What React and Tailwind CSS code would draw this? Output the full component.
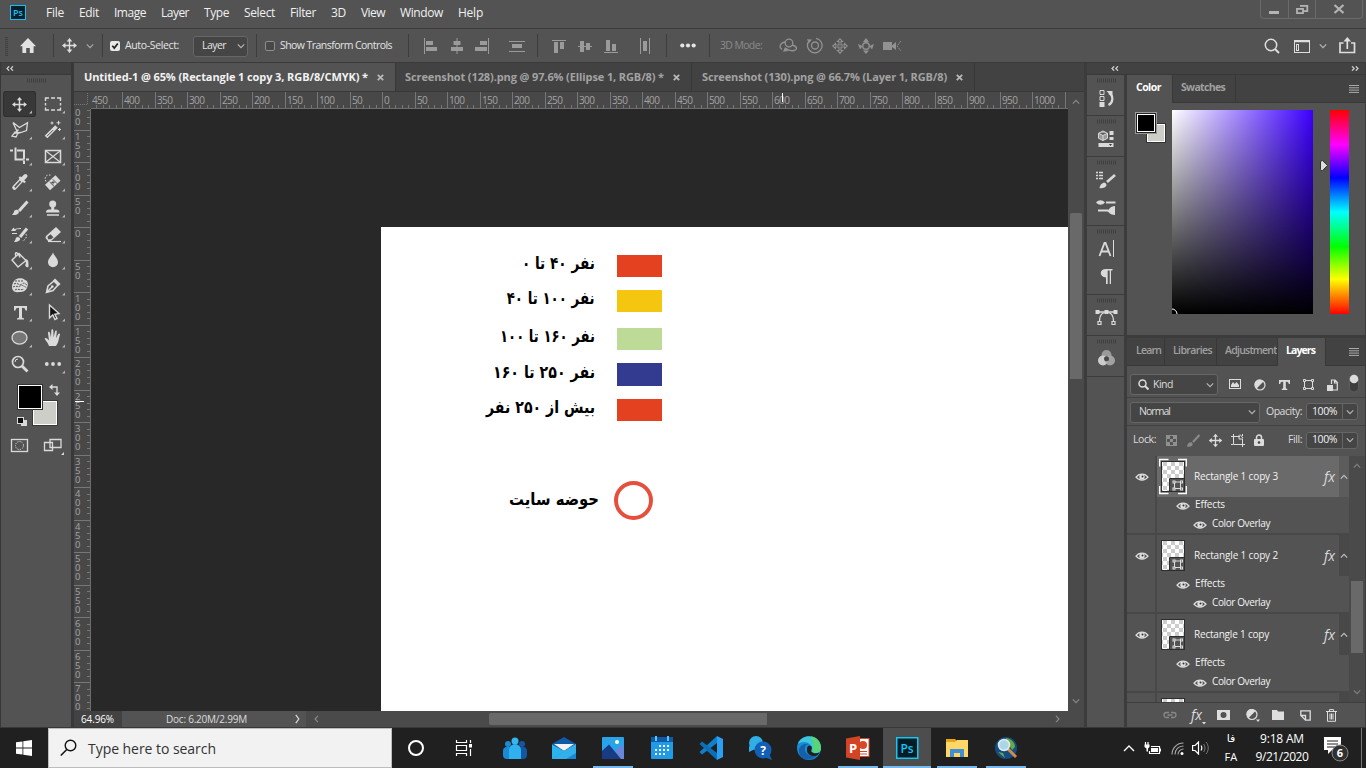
import React, { useLayoutEffect, useRef } from "react";

/* Text run fitted to a fixed advance width by letter spacing (or by horizontal scale for joined scripts). */
function Fit({ w, scale, className = "", children }) {
  const ref = useRef(null);
  useLayoutEffect(() => {
    const el = ref.current;
    el.style.letterSpacing = "0px";
    el.style.transform = "none";
    const natural = el.getBoundingClientRect().width;
    if (scale) el.style.transform = `scaleX(${w / natural})`;
    else el.style.letterSpacing = `${(w - natural) / String(children).length}px`;
  }, [w, scale, children]);
  return (
    <span ref={ref} className={"inline-block shrink-0 whitespace-pre " + className}>
      {children}
    </span>
  );
}

function S({ w, h, className = "", children }) {
  return (
    <svg width={w} height={h} viewBox={`0 0 ${w} ${h}`} fill="none" stroke="currentColor" className={"block shrink-0 " + className}>
      {children}
    </svg>
  );
}

const F = { fill: "currentColor", stroke: "none" };

const Grip = ({ className = "" }) => (
  <S w={20} h={5} className={"text-[#3f3f3f] " + className}>
    <path d="M1 2.5H20" strokeWidth="4" strokeDasharray="1 1" />
  </S>
);
const Chevron = ({ className = "", up }) => (
  <S w={8} h={6} className={className}>
    <path d={up ? "M.8 4.6 4 1.4l3.2 3.2" : "M.8 1.4 4 4.6l3.2-3.2"} strokeWidth="1.2" />
  </S>
);
const Move = ({ className = "" }) => (
  <S w={15} h={15} className={className}>
    <path d="M7.5 2v11M2 7.5h11" strokeWidth="1.4" />
    <path {...F} d="M7.5 0 10.3 3.4H4.7ZM7.5 15 4.7 11.6h5.6ZM0 7.5 3.4 4.7v5.6ZM15 7.5l-3.4 2.8V4.7Z" />
  </S>
);
const DoubleArrow = ({ right }) => (
  <S w={8} h={5} className="text-[#d0d0d0]">
    <path d={right ? "M1 .3 3.2 2.5 1 4.7M4.8.3 7 2.5 4.8 4.7" : "M3.2.3 1 2.5l2.2 2.2M7 .3 4.8 2.5 7 4.7"} strokeWidth="1.2" />
  </S>
);

const MENU = [
  ["File", 18, "w-[33px]"], ["Edit", 20, "w-[35px]"], ["Image", 32, "w-[47px]"], ["Layer", 28, "w-[43px]"],
  ["Type", 25, "w-[40px]"], ["Select", 31, "w-[46px]"], ["Filter", 26, "w-[41px]"], ["3D", 15, "w-[30px]"],
  ["View", 24, "w-[39px]"], ["Window", 43, "w-[58px]"], ["Help", 25, "w-[40px]"],
];

function MenuBar() {
  return (
    <div className="flex h-[29px] shrink-0 border-b border-[#3a3a3a] text-[12px] text-[#f0f0f0]">
      <div className="ml-[10px] mt-[5px] flex h-[15px] w-4 items-center justify-center border border-[#12c0f4] bg-[#06202b] text-[9px] font-semibold leading-none text-[#23bdee]">Ps</div>
      <div className="ml-5 flex h-[26px] items-center">
        {MENU.map(([t, w, c]) => (
          <div key={t} className={c}><Fit w={w}>{t}</Fit></div>
        ))}
      </div>
      <div className="ml-auto mr-[3px] flex h-[19px] w-[103px] rounded-b border border-t-0 border-[#6a6a6a] text-[#b4b4b4]">
        <S w={27} h={18}><path d="M8 12.5h10" strokeWidth="3" /></S>
        <div className="w-px bg-[#6a6a6a]" />
        <S w={26} h={18}><path d="M11 5.8h7.3v5.4H14M8 8.8h6v4.4H8Z" strokeWidth="1.8" /></S>
        <div className="w-px bg-[#6a6a6a]" />
        <S w={46} h={18}><path d="m18.5 5 9 8M27.500 5l-9 8" strokeWidth="2.2" /></S>
      </div>
    </div>
  );
}

const Sep = ({ className = "" }) => <div className={"h-[23px] w-px shrink-0 bg-[#3d3d3d] " + className} />;

function OptionsBar() {
  return (
    <div className="flex h-[34px] shrink-0 items-center border-b border-[#3a3a3a] text-[10.5px] text-[#e4e4e4]">
      <S w={3} h={20} className="ml-[5px] text-[#3f3f3f]"><path d="M1.500 1v19" strokeWidth="3" strokeDasharray="1 1" /></S>
      <S w={16} h={15} className="ml-3 text-[#e2e2e2]"><path {...F} d="M8 0 16 8.300H13.600V15H9.800V10H6.200v5H2.400V8.300H0Z" /></S>
      <Sep className="ml-[17px]" />
      <Move className="ml-2 text-[#dedede]" />
      <Chevron className="ml-[9px] text-[#a9a9a9]" />
      <Sep className="ml-2" />
      <S w={10} h={10} className="ml-[7px]"><rect width="10" height="10" rx="2" fill="#e8e8e8" stroke="none" /><path d="m2.300 4.800 2 2.300L7.800 2.500" stroke="#222" strokeWidth="1.700" /></S>
      <Fit w={54} className="ml-[5px]">Auto-Select:</Fit>
      <div className="ml-[14px] mt-px flex h-[21px] w-[55px] items-center rounded-[3px] border border-[#666] bg-[#454545] pl-2">
        <Fit w={24}>Layer</Fit><Chevron className="ml-[11px] text-[#b5b5b5]" />
      </div>
      <Sep className="ml-2" />
      <div className="ml-2 size-[10px] rounded-[2px] border border-[#8e8e8e] bg-[#484848]" />
      <Fit w={112} className="ml-[5px]">Show Transform Controls</Fit>
      <Sep className="ml-4" />
      <div className="flex items-center text-[#9b9b9b]">
        <S w={14} h={16} className="ml-[15px]"><path d="M.5 0v16" /><path {...F} d="M2 3h7v4H2zM2 9h11v4H2z" /></S>
        <S w={12} h={16} className="ml-[13px]"><path d="M6 0v16" /><path {...F} d="M2.500 3h7v4h-7zM0 9h12v4H0z" /></S>
        <S w={14} h={16} className="ml-3"><path d="M13.500 0v16" /><path {...F} d="M5 3h7v4H5zM0 9h12v4H0z" /></S>
        <S w={16} h={16} className="ml-5"><path d="M0 3.500h16M0 13.500h16" /><path {...F} d="M3 6h10v4H3z" /></S>
        <Sep className="ml-[12px]" />
        <S w={14} h={16} className="ml-[14px]"><path d="M0 2.500h14" /><path {...F} d="M2 4h4v11H2zM8 4h4v7H8z" /></S>
        <S w={14} h={16} className="ml-3"><path d="M0 8.500h14" /><path {...F} d="M2 3h4v11H2zM8 5h4v7H8z" /></S>
        <S w={14} h={16} className="ml-3"><path d="M0 14.500h14" /><path {...F} d="M2 2h4v11H2zM8 6h4v7H8z" /></S>
        <S w={10} h={16} className="ml-[22px]"><path d="M.5 0v16M9.500 0v16" /><path {...F} d="M3 3h4v10H3z" /></S>
      </div>
      <Sep className="ml-4" />
      <S w={16} h={5} className="ml-[13px] text-[#e4e4e4]"><g {...F}><circle cx="2.300" cy="2.500" r="2.100" /><circle cx="8" cy="2.500" r="2.100" /><circle cx="13.700" cy="2.500" r="2.100" /></g></S>
      <Sep className="ml-[13px]" />
      <Fit w={42} className="ml-[10px] text-[#8b8b8b]">3D Mode:</Fit>
      <div className="flex items-center text-[#929292]">
        <S w={19} h={16} className="ml-[17px]"><circle cx="10" cy="5" r="3.800" strokeWidth="1.300" /><path d="M7 4C1 4.500-.5 9 3 11.500M13 7c5 1 6 4.500 2 5.500-3 .7-6-.5-8-2" strokeWidth="1.300" /><path {...F} d="M4 13.800 9.500 13 6 9Z" /></S>
        <S w={17} h={17} className="ml-[8px]"><circle cx="9" cy="8.500" r="3.500" strokeWidth="1.300" /><path d="M3 4A7.300 7.300 0 1 0 10 1.300" strokeWidth="1.300" /><path {...F} d="m1 2.200 5 .3-3 3.700Z" /></S>
        <S w={16} h={16} className="ml-[9px]"><path d="M8 .8 10.500 3.500H9v3.500h3.500V5.500L15.200 8l-2.700 2.500V9H9v3.500h1.500L8 15.200 5.500 12.500H7V9H3.500v1.500L.8 8l2.700-2.500V7H7V3.500H5.500Z" strokeWidth="1.100" /></S>
        <S w={16} h={16} className="ml-[10px]"><circle cx="8" cy="8" r="3.300" strokeWidth="1.400" /><path {...F} d="m8 0 3 4H5ZM8 16l-3-3.500h6ZM0 6l4.500 2L2 11.500ZM16 6l-4.500 2 2.500 3.500Z" /></S>
        <S w={19} h={12} className="ml-[9px]"><path {...F} d="M0 2h9v8H0zM9 5.500 13 2v8L9 7Z" /><path d="m18 1-4 5 4 5" strokeDasharray="2 1" /></S>
      </div>
      <div className="ml-auto mr-[10px] flex items-center text-[#dedede]">
        <S w={16} h={16}><circle cx="7" cy="7" r="5.700" strokeWidth="1.500" /><path d="m11 11 4 4" strokeWidth="1.900" /></S>
        <S w={16} h={13} className="ml-[14px] mt-px"><rect x=".5" y=".5" width="15" height="12" /><path d="M0 1.500h16" strokeWidth="1.500" /><rect x="2.500" y="4.500" width="2" height="6" /></S>
        <Chevron className="ml-[9px] text-[#b5b5b5]" />
        <S w={17} h={17} className="ml-3"><path d="M4.500 6H1v9.500h14.500V6H12M8.300 12V2" strokeWidth="1.700" /><path {...F} d="m8.300 0 3.800 4.500H4.500Z" /></S>
      </div>
    </div>
  );
}

const TOOLS = [
  <><path d="M9.500 5v11M4 10.500h11" strokeWidth="1.500" /><path {...F} d="m9.500 3 2.600 3.200H6.900ZM9.500 18l-2.600-3.200h5.200ZM2 10.500l3.200-2.600v5.200ZM17 10.500l-3.200 2.600V7.900Z" /></>,
  <path d="M2.500 7V4H6m2 0h4m2 0h3.500v3m0 2v2.500m0 2V16H14m-2 0H8m-2 0H2.500v-2.500m0-2V9" strokeWidth="1.400" />,
  <><path d="m3 2.500 6.500 5 8-4.800-1 7.800-8.500 3L3 2.500M8.500 9.500 5.500 13l5.500-.5M8.500 12 6 17l-4-1 3.500-4.500" strokeWidth="1.300" /></>,
  <><path d="M3 17 13.500 6.500" strokeWidth="3.800" /><path d="m4 16.200 6-6" stroke="#535353" strokeWidth="1" /><path d="M9 1.500v3M7.500 3h3M15.500.8v4M13.500 2.800h4M16.500 8v3M15 9.500h3" /></>,
  <><path d="M5.500 1.500v12h8M0 4.500h3M7 4.500h7v9M14 14.500v3.500M16 13.500h3" strokeWidth="2" /></>,
  <><rect x="2.500" y="4.500" width="15" height="12" strokeWidth="1.500" /><path d="m3 5 14 11M17 5 3 16" strokeWidth="1.200" /></>,
  <><path d="m4.500 15.500 7.500-8" strokeWidth="4.500" strokeLinecap="round" /><path d="m4.800 15.300 5.800-6.200" stroke="#535353" strokeWidth="1.700" /><path d="M12 7.500 15.500 4" strokeWidth="4" strokeLinecap="round" /><path d="m9.300 5 5.800 5.500" strokeWidth="2.200" /></>,
  <><path d="m4.500 15.500 10.500-9.500" strokeWidth="7.500" strokeLinejoin="round" /><path d="M6.700 10 11 14.300M9.800 7.300l4.200 4.300M8.300 10.500l3.200 0M10 9v3.500" stroke="#535353" strokeWidth="1" /><path d="M3 9.500C.5 5.500 3.500 1.500 8.500 3.500" strokeDasharray="1.500 1.500" /></>,
  <><path d="M17.500 3.500 9 13" strokeWidth="3" /><path {...F} d="M2 17c2.500.3 7.800-.5 6.800-3.800-2-2.500-4.800-1.200-5 1.300Z" /></>,
  <><circle cx="9.700" cy="6" r="3.500" {...F} /><path d="M9.700 8v4" strokeWidth="3" /><path {...F} d="M3 14.500c0-3.500 3-3 6.700-3s6.800-.5 6.800 3ZM4 16.300h12v1.500H4z" /></>,
  <><path d="M17 4.500 10 13" strokeWidth="3" /><path {...F} d="M4 18c2 0 6.800-.7 6-3.800-2-2.500-4.500-1-4.500 1.300ZM1 7l2.500-3.500L6 7Z" /><path d="M4 6c2-1.500 4-1.500 7-1.500M2 9.500h5" strokeWidth="1.200" /><path d="M16 10c1.500 3-1 6.500-4 7" strokeDasharray="1.500 1.500" /></>,
  <><path {...F} d="m3 12 10-9 5 5-10 9H5L2.500 14Z" /><path d="m4.500 12.800 3-2.500 3 3-2.500 2H5Z" fill="#535353" stroke="none" /><path d="M5 17.500h13" strokeWidth="1.200" /></>,
  <><path d="m2 10 7-6.500 7 7-8 6.500-6-7ZM6 6.500C4 1 8 1.500 10 7.500" strokeWidth="1.400" /><path {...F} d="M14.500 9c4.500 0 4 3 4 8-3 1-4-2-2.500-4Z" /></>,
  <path {...F} d="M10 2.500c1.500 4 5 5.800 5 9.700a5 5 0 0 1-10 0C5 8.300 8.500 6.500 10 2.500Z" />,
  <><path {...F} d="M5 4c2-2 8-2.500 10 0 4 1 3 6 2 8-2 4-5 4-8 4C4 17 2 14 2 11c0-3 1-5 3-7Z" /><path d="M5 5h8m-9 3c3-2 5 2 8 0s3 0 5 1M3 11c4-2 4 1 7-1s5 2 7 1M5 14c3-2 5 1 9-1" stroke="#535353" strokeDasharray="2 1" /></>,
  <><path d="M3.500 16.500 5 10l6-5 4 4-5 5.500ZM4 16l5.500-5.500" strokeWidth="1.500" /><path d="m11 3.500 5.500 5.500" strokeWidth="3" /><circle cx="9.300" cy="10.500" r="1.300" {...F} /></>,
  <path {...F} d="M4 4h13v4.500h-1.500c-.3-2-1-2.700-3.500-2.700v9c0 1.200.7 1.500 2 1.500V17.500H7v-1.200c1.300 0 2-.3 2-1.500v-9C6.500 5.800 5.800 6.500 5.500 8.500H4Z" />,
  <><path d="M6.500 3v13l3.300-3 2.200 4.500 2-1-2.200-4.300 4.200-.7Z" fill="#111" strokeWidth="1.400" /></>,
  <ellipse cx="9.500" cy="9.800" rx="7.500" ry="6.300" fill="#777" strokeWidth="1.300" />,
  <path {...F} d="M6 18C5 14.500 2 12 1.500 10.500 2.500 9 5 11 6 12.500L5 5c0-1.800 1.700-1.800 2 0l1 4.500.3-7c.2-1.600 1.900-1.600 2 0l.3 7 1.400-6c.5-1.600 2-1.200 1.800.3l-.7 6.500 2-4c.8-1.300 2.300-.6 1.800.8-1 3-1.300 8-4 10.900Z" />,
  <><circle cx="8" cy="8" r="5.500" strokeWidth="1.700" /><path d="m12 12 5.500 5.500" strokeWidth="2.800" /><path d="M5 8a3 3 0 0 1 3-3" /></>,
  <g {...F}><circle cx="3.800" cy="10" r="1.900" /><circle cx="10" cy="10" r="1.900" /><circle cx="16.200" cy="10" r="1.900" /></g>,
];

function Toolbar() {
  return (
    <aside className="flex w-[74px] shrink-0 flex-col border-x border-r-[3px] border-[#383838] bg-[#535353]">
      <div className="flex h-[12px] items-center border-b border-[#383838] bg-[#424242] pl-[5px]"><DoubleArrow /></div>
      <div className="flex h-[16px] justify-center pt-[3px]"><Grip /></div>
      <div className="ml-[2px] grid w-[66px] grid-cols-2">
        {TOOLS.map((icon, i) => (
          <div key={i} className={"h-[26px] w-[33px] " + (i === 0 ? "rounded-[3px] bg-[#383838] outline outline-1 -outline-offset-1 outline-[#2e2e2e]" : "")}>
            <S w={33} h={26} className="text-[#dadada]">
              <g transform="translate(7 3)">{icon}</g>
              {i !== 20 && <path {...F} fill="#b5b5b5" d="M29 19.500V22.500h-3Z" />}
            </S>
          </div>
        ))}
      </div>
      <S w={68} h={80} className="text-[#dadada]">
        <rect x="31" y="23" width="26" height="26" fill="#383838" stroke="none" /><rect x="32.500" y="24.500" width="23" height="23" fill="#cdcec8" stroke="#fff" />
        <rect x="16" y="7" width="26" height="26" fill="#333" stroke="none" /><rect x="17.500" y="8.500" width="23" height="23" fill="#000" stroke="#fff" />
        <path d="M50 10h6v6" strokeWidth="1.400" /><path {...F} d="m48 10 3.500-3v6ZM56 19l-3-3.500h6Z" />
        <path {...F} d="M20 43h6v6h-6zM16 40h7v7h-7z" /><path d="M17 41h5v5h-5z" fill="#111" stroke="none" />
        <rect x="10.500" y="62.500" width="16" height="12" strokeWidth="1.300" /><circle cx="18.500" cy="68.500" r="4" strokeDasharray="1.200 1.100" />
        <path d="M43.500 65.500h8v8h-8zM49 62.500h11v8H49z" strokeWidth="1.300" fill="#535353" /><path {...F} d="M63 75v3h-3Z" />
      </S>
    </aside>
  );
}

const TABS = [
  ["Untitled-1 @ 65% (Rectangle 1 copy 3, RGB/8/CMYK) *", 284, "w-[322px] bg-[#535353] text-[#f2f2f2] pl-[10px]", "ml-[9px]"],
  ["Screenshot (128).png @ 97.6% (Ellipse 1, RGB/8) *", 259, "w-[296px] bg-[#424242] text-[#a3a3a3] pl-[9px]", "ml-[9px]"],
  ["Screenshot (130).png @ 66.7% (Layer 1, RGB/8)", 245, "w-[283px] bg-[#424242] text-[#a3a3a3] pl-[10px]", "ml-[9px]"],
];

function HRuler() {
  const zero = 308.500, k = 0.65, items = [];
  for (let u = -450; u <= 1050; u += 10) {
    const x = Math.floor(zero + u * k) + 0.5, major = u % 50 === 0;
    if (x > 17) items.push(<path key={u} d={`M${x} ${major ? 0 : 13}V16`} stroke="#777" />);
    if (major && u < 1050) items.push(<text key={"t" + u} x={x + 1.500} y="12" fontSize="10" textLength={String(Math.abs(u)).length * 5.300} fill="#a3a3a3" stroke="none">{Math.abs(u)}</text>);
  }
  return (
    <S w={994} h={17} className="bg-[#484848]">
      {items}
      <path d="M17 16.500H994" stroke="#6d6d6d" /><path d="M0 12.500h13.500V0" stroke="#777" strokeDasharray="1 1" /><path d="M708.500 1v9" stroke="#fff" />
    </S>
  );
}

function VRuler() {
  const items = [];
  for (let u = -180; u <= 740; u += 10) {
    const y = Math.floor(118.500 + u * 0.65) + 0.5, major = u % 50 === 0;
    items.push(<path key={u} d={`M${major ? 0 : 13} ${y}H16`} stroke="#777" />);
  }
  for (let u = -200; u <= 700; u += 50) {
    const y = Math.floor(118.500 + u * 0.65);
    String(Math.abs(u)).split("").forEach((c, i) => items.push(<text key={u + "-" + i} x="1" y={y + 10 + i * 9} fontSize="9.5" fill="#a3a3a3" stroke="none">{c}</text>));
  }
  return <S w={17} h={602} className="bg-[#484848]">{items}<path d="M16.500 0V602" stroke="#6d6d6d" /><path d="M1 292.500h9" stroke="#fff" /></S>;
}

const LEGEND = [
  ["نفر ۴۰ تا ۰", 73, "mt-[28px] h-[22px] bg-[#e34120]"],
  ["نفر ۱۰۰ تا ۴۰", 88, "mt-[13px] h-[22px] bg-[#f4c60f]"],
  ["نفر ۱۶۰ تا ۱۰۰", 95, "mt-[16px] h-[22px] bg-[#bddb97]"],
  ["نفر ۲۵۰ تا ۱۶۰", 102, "mt-[13px] h-[23px] bg-[#333b91]"],
  ["بیش از ۲۵۰ نفر", 109, "mt-[13px] h-[22px] bg-[#e34120]"],
];

function Document() {
  return (
    <section className="flex w-[1010px] shrink-0 flex-col">
      <div className="flex h-[29px] shrink-0 border-b border-[#383838] bg-[#424242] text-[11px] font-bold">
        {TABS.map(([t, w, c, m]) => (
          <div key={t} className={"flex items-center border-r border-[#383838] " + c}>
            <Fit w={w}>{t}</Fit>
            <S w={7} h={7} className={"text-[#b8b8b8] " + m}><path d="m.8.8 5.400 5.400M6.200.8.800 6.200" strokeWidth="1.800" /></S>
          </div>
        ))}
      </div>
      <div className="flex shrink-0">
        <div>
          <HRuler />
          <div className="flex h-[602px]">
            <VRuler />
            <div className="flex-1 bg-[#282828] pl-[290px] pt-[118px]">
              <div className="h-full bg-white">
                <div dir="ltr" className="flex w-[282px] flex-col items-end font-['DejaVu_Sans',sans-serif] text-[17px] font-bold text-black">
                  {LEGEND.map(([t, w, c]) => (
                    <div key={t} className={"mr-px flex w-[45px] items-center justify-end " + c}>
                      <div dir="rtl" className="mr-[67px] h-[26px] leading-[20px]"><Fit w={w} scale className="origin-right">{t}</Fit></div>
                    </div>
                  ))}
                  <div className="mr-[10px] mt-[60px] flex items-center">
                    <div dir="rtl" className="mr-[15px] h-[26px] leading-[22px]"><Fit w={90} scale className="origin-right">حوضه سایت</Fit></div>
                    <div className="size-[39px] rounded-full border-[4px] border-[#e74f3d]" />
                  </div>
                </div>
              </div>
            </div>
          </div>
        </div>
        <div className="flex w-4 flex-col items-center bg-[#4a4a4a] text-[#888]">
          <Chevron up className="mt-[7px]" />
          <div className="mt-[108px] h-[166px] w-3 rounded-t-[2px] bg-[#696969]" />
          <Chevron className="mb-[7px] mt-auto" />
        </div>
      </div>
      <div className="flex h-4 shrink-0 items-center bg-[#4a4a4a] text-[10px] text-[#dcdcdc]">
        <div className="flex h-full w-[48px] items-center bg-[#424242] pl-[7px] text-white"><Fit w={33}>64.96%</Fit></div>
        <div className="flex h-full w-[184px] items-center bg-[#535353] pl-[44px]">
          <Fit w={81}>Doc: 6.20M/2.99M</Fit>
          <S w={5} h={10} className="ml-[48px]"><path d="m.8.8 3 4.200-3 4.200" strokeWidth="1.200" /></S>
        </div>
        <S w={5} h={8} className="ml-[8px] text-[#888]"><path d="m4 .8-3 3.200 3 3.200" strokeWidth="1.200" /></S>
        <div className="ml-[170px] h-3 w-[278px] rounded-l-[2px] bg-[#696969]" />
        <S w={5} h={8} className="ml-[288px] text-[#888]"><path d="m1 .8 3 3.200-3 3.200" strokeWidth="1.200" /></S>
      </div>
    </section>
  );
}

const STRIP = [
  ["h-[41px]", <><path d="M11 11.500h4v4h-4zM11 17.500h4v4h-4z" /><path {...F} d="M10.500 23h5v5h-5zM17.500 12h6v6Z" /><path d="M20 14c5 3 4 10-.5 12" strokeWidth="2.200" /></>],
  ["h-[41px]", <><path d="m14 11 4.500 2.300v5L14 20.500 9.500 18.300v-5ZM9.500 13.300l4.500 2.200 4.500-2.200M14 15.500v5" fill="#999" /><path {...F} d="M20.500 11h4v4h-4zM20.500 17h4v3h-4zM9.500 23h15v4h-15z" /><path d="m20 24 3 0-1.500 2Z" fill="#333" stroke="none" /></>],
  ["h-[69px]", <><path d="M7 11.500h2m1 0h4M7 14.500h2m1 0h4M7 17.500h2m1 0h4" strokeWidth="1.500" /><path d="m26 14-8 7" strokeWidth="2.600" /><path {...F} d="M10.500 27c.5-3 3-6 6-5 3 3-1.500 6-6 5ZM7 41.500c3-3 6-3 9 0-3 3-6 3-9 0Z" /><path d="M17 41.500h9.500M9 49.500h10" strokeWidth="1.800" /><path {...F} d="M18 50c2-1 3-5 8-5v9c-5 0-6-3-8-4Z" /></>],
  ["h-[69px]", <><path d="m11 27 5-13h1l5 13M12.500 22.500h8" strokeWidth="1.800" transform="translate(-.5 -1)" /><path d="M24.500 10v17" /><path {...F} d="M17 54V47.500C10 47 10 39 17 39h6.500v1.500H22V54h-1.300V40.500h-2V54Z" /></>],
  ["h-[41px]", <><path d="M7 13h19" strokeWidth="1.500" /><path {...F} d="M5.500 11h4v4h-4zM14.500 11h4v4h-4zM23.500 11h4v4h-4z" /><path d="M14.500 13.500c-4 1-5 5-5 9M18.500 13.500c4 1 5 5 5 9M8 22.500h3v3H8zM22 22.500h3v3h-3z" strokeWidth="1.200" /></>],
  ["h-[41px]", <><circle cx="16.500" cy="15" r="5" fill="#999" stroke="none" /><circle cx="13" cy="20.500" r="5" fill="#ccc" stroke="none" /><circle cx="20" cy="20.500" r="5" fill="#aaa" stroke="none" fillOpacity=".9" /><circle cx="16.500" cy="18.700" r="2.500" fill="#484848" stroke="none" /></>],
];

const Burger = () => <S w={10} h={8} className="text-[#aaa]"><path d="M0 .5h10M0 2.800h10M0 5.100h10M0 7.400h10" /></S>;
const Eye = ({ className = "" }) => (
  <S w={14} h={8} className={"text-[#dedede] " + className}>
    <path d="M1 4.200C4 0 10 0 13 4.200 10 8 4 8 1 4.200Z" strokeWidth="1.300" /><circle cx="7" cy="4" r="2.700" {...F} /><circle cx="7.500" cy="3.400" r="1" fill="#333" stroke="none" />
  </S>
);

function ColorPanel() {
  return (
    <div className="flex h-[263px] shrink-0 flex-col border-b-[3px] border-[#3c3c3c]">
      <div className="flex h-[28px] shrink-0 bg-[#424242] text-[10.5px] font-bold">
        <div className="w-[45px] bg-[#535353] pl-[9px] pt-[5px] text-white"><Fit w={25}>Color</Fit></div>
        <div className="flex w-[64px] flex-1 border-b border-l border-[#383838] text-[#a0a0a0]">
          <div className="w-[63px] border-r border-[#383838] pl-2 pt-[5px]"><Fit w={44}>Swatches</Fit></div>
          <div className="ml-auto mr-[6px] flex items-center"><Burger /></div>
        </div>
      </div>
      <div className="flex pt-[7px]">
        <S w={45} h={40}>
          <rect x="19" y="13" width="20" height="20" fill="#333" stroke="none" /><rect x="20.500" y="14.500" width="17" height="17" fill="#cdcec8" stroke="#fff" />
          <rect x="8.500" y="2.500" width="21" height="21" fill="#222" stroke="#999" /><rect x="10.500" y="4.500" width="17" height="17" fill="#000" stroke="#fff" />
        </S>
        <div className="h-[204px] w-[141px] bg-[linear-gradient(to_top,#000,transparent),linear-gradient(to_right,#fff,#3c00ff)]">
          <S w={12} h={204}><path d="M0 199a5 5 0 0 1 5 5" stroke="#fff" /></S>
        </div>
        <S w={10} h={14} className="ml-[7px] mt-[49px]"><path d="M.5 3Q.5 1.500 2.500 1.500L7.500 6.500 2.500 11.500Q.5 12 .5 10.500Z" fill="#ddd" stroke="#333" /></S>
        <div className="h-[204px] w-[19px] bg-[linear-gradient(to_bottom,#f00,#f0f_17%,#00f_33.300%,#0ff_50%,#0f0_67%,#ff0_83%,#f00)]" />
      </div>
    </div>
  );
}

const LTABS = [["Learn", 25, "w-[38px] pl-[9px]"], ["Libraries", 39, "w-[52px] pl-[8px]"], ["Adjustments", 56, "w-[61px] pl-[8px]"]];

function PercentBox() {
  return (
    <div className="flex h-[17px] w-[52px] items-center rounded-[3px] border border-[#666] bg-[#454545] text-[#f2f2f2]">
      <div className="flex h-full w-[36px] items-center border-r border-[#666] pl-[5px]"><Fit w={25}>100%</Fit></div>
      <Chevron className="ml-[3px] text-[#b5b5b5]" />
    </div>
  );
}

function Thumb({ selected }) {
  return (
    <S w={28} h={37}>
      <rect x="2.500" y="3.500" width="23" height="30" fill="url(#chk)" stroke="#2d2d2d" />
      <rect x="11" y="21" width="14" height="12" fill="#535353" stroke="none" />
      <path d="M26 20.500H10.500V34" stroke="#2d2d2d" />
      <path d="M15.500 24h6v6.500h-6z" stroke="#ddd" /><path {...F} fill="#ddd" d="M13.500 22.500h3v3h-3zM21 22.500h3v3h-3zM13.500 29.500h3v3h-3zM21 29.500h3v3h-3z" /><path {...F} fill="#535353" d="M14.500 23.500h1v1h-1zM22 23.500h1v1h-1zM14.500 30.500h1v1h-1zM22 30.500h1v1h-1z" />
      {selected && <path d="M9.500 1.500H.7v7M19 1.500h8.300v7M.7 28v7.500h8.800M19 35.500h8.300V28" stroke="#fff" strokeWidth="1.300" />}
    </S>
  );
}

function Layer({ name, w, selected }) {
  return (
    <div className="flex h-[79px] shrink-0 border-b-2 border-[#484848]">
      <div className="w-[30px] border-r-2 border-[#484848] pl-[8px] pt-[17px]"><Eye /></div>
      <div className="flex-1">
        <div className={"flex h-[41px] items-center " + (selected ? "bg-[#6a6a6a]" : "")}>
          <div className="ml-[2px]"><Thumb selected={selected} /></div>
          <Fit w={w} className="ml-[7px] text-[10px] text-[#f2f2f2]">{name}</Fit>
          <span className="ml-auto mr-[4px] text-[14px] italic leading-none text-[#dcdcdc]">fx</span>
          <div className={"flex h-full w-[10px] items-center justify-center " + (selected ? "bg-[#5c5c5c]" : "bg-[#484848]")}><Chevron up className="text-[#c0c0c0]" /></div>
        </div>
        <div className="flex h-[15px] items-center pl-[19px]"><Eye className="mt-[3px]" /><Fit w={30} className="ml-[5px] text-[10px] text-[#f2f2f2]">Effects</Fit></div>
        <div className="mt-[4px] flex h-[15px] items-center pl-[36px]"><Eye className="mt-[3px]" /><Fit w={58} className="ml-[5px] text-[10px] text-[#f2f2f2]">Color Overlay</Fit></div>
      </div>
    </div>
  );
}

function LayersPanel() {
  return (
    <div className="flex flex-1 flex-col text-[10.5px]">
      <div className="flex h-[28px] shrink-0 bg-[#424242] font-bold text-[#a0a0a0]">
        {LTABS.map(([t, w, c]) => (
          <div key={t} className={"overflow-hidden border-b border-r border-[#383838] pt-[5px] font-semibold " + c}><Fit w={w}>{t}</Fit></div>
        ))}
        <div className="w-[47px] bg-[#535353] pl-2 pt-[5px] text-white"><Fit w={29}>Layers</Fit></div>
        <div className="flex flex-1 items-center justify-end border-b border-l border-[#383838] pr-[6px]"><Burger /></div>
      </div>
      <div className="flex h-[32px] shrink-0 items-center border-b border-[#424242] pl-[3px] text-[#dcdcdc]">
        <div className="mt-[6px] flex h-[21px] w-[88px] items-center rounded-[3px] border border-[#666] bg-[#454545] pl-[7px]">
          <S w={11} h={11}><circle cx="4.500" cy="4.500" r="3.500" strokeWidth="1.500" /><path d="m7 7 3.500 3.500" strokeWidth="2" /></S>
          <Fit w={20} className="ml-[4px]">Kind</Fit><Chevron className="ml-auto mr-[3px] text-[#b5b5b5]" />
        </div>
        <S w={12} h={10} className="ml-[11px] mt-[5px]"><rect x=".5" y=".5" width="11" height="9" /><path {...F} d="M2 8V6l2-3 1.700 2L7.500 3 10 6v2Z" /></S>
        <S w={12} h={12} className="ml-[13px] mt-[6px]"><circle cx="6" cy="6" r="5" strokeWidth="1.200" /><path {...F} d="M9.500 2.500a5 5 0 1 0-7 7Z" /></S>
        <S w={11} h={11} className="ml-[13px] mt-[6px]"><path {...F} d="M0 1h11v4H9.800C9.500 3 9 2.700 6.800 2.700v6c0 .8.500 1 1.500 1V11H2.700V9.700c1 0 1.500-.2 1.500-1v-6C2 2.700 1.500 3 1.200 5H0Z" /></S>
        <S w={11} h={11} className="ml-[13px] mt-[6px]"><path d="M1.500 1.500h8v8h-8z" /><path d="M.5.5h2v2h-2zM8.500.5h2v2h-2zM.5 8.500h2v2h-2zM8.500 8.500h2v2h-2z" fill="#535353" /></S>
        <S w={11} h={12} className="ml-[13px] mt-[6px]"><path d="M4.500 5V1H8l2.300 2.300V11H6M7.500 1v3h3" strokeWidth="1.200" /><path {...F} d="M0 6h6v6H0z" /></S>
        <S w={10} h={20} className="ml-[11px] mt-[3px]"><rect x=".5" y="1.500" width="9" height="17.500" rx="4.500" fill="#3e3e3e" stroke="#5e5e5e" /><circle cx="5" cy="6" r="4.300" {...F} /></S>
      </div>
      <div className="flex h-[28px] shrink-0 items-center border-b border-[#424242] pl-[3px] text-[#dcdcdc]">
        <div className="mt-px flex h-[21px] w-[130px] items-center rounded-[3px] border border-[#666] bg-[#454545] pl-2"><Fit w={31}>Normal</Fit><Chevron className="ml-auto mr-[3px] text-[#b5b5b5]" /></div>
        <Fit w={36} className="ml-[6px] mr-[4px]">Opacity:</Fit><PercentBox />
      </div>
      <div className="flex h-[30px] shrink-0 items-center pb-[2px] pl-[6px] text-[#dcdcdc]">
        <Fit w={23}>Lock:</Fit>
        <S w={11} h={11} className="ml-[10px] text-[#909090]"><rect x=".5" y=".5" width="10" height="10" /><path {...F} d="M1 1h3v3H1zM7 1h3v3H7zM4 4h3v3H4zM1 7h3v3H1zM7 7h3v3H7z" /></S>
        <S w={13} h={13} className="ml-[10px] text-[#8b8b8b]"><path d="M12.500 1 6 8" strokeWidth="2.200" /><path {...F} d="M0 12.500c.5-3 2.500-5 5-4 2 3-1 5-5 4Z" /></S>
        <Move className="ml-[8px] scale-90" />
        <S w={14} h={13} className="ml-[8px]"><path d="M0 2.500h9M2.500 0v10.500H14M11.500 5v8M9 .5 12 4M0 10.500h2M11.500 0v2" strokeDasharray="none" /><path d="M8 1v4h4" /></S>
        <S w={10} h={12} className="ml-[9px]"><path d="M2.500 6V3.500a2.500 2.500 0 0 1 5 0V6" strokeWidth="1.500" /><rect y="5" width="10" height="7" rx="1" {...F} /><circle cx="5" cy="8.500" r="1.300" fill="#444" stroke="none" /></S>
        <Fit w={14} className="ml-auto mr-[4px]">Fill:</Fit><div className="mr-[7px]"><PercentBox /></div>
      </div>
      <div className="flex h-[246px] shrink-0">
        <div className="flex w-[222px] flex-col overflow-hidden">
          <svg width="0" height="0" className="absolute"><defs><pattern id="chk" width="8" height="8" patternUnits="userSpaceOnUse"><rect width="8" height="8" fill="#fff" /><path d="M0 0h4v4H0zM4 4h4v4H4z" fill="#ccc" /></pattern></defs></svg>
          <Layer name="Rectangle 1 copy 3" w={84} selected /><Layer name="Rectangle 1 copy 2" w={84} /><Layer name="Rectangle 1 copy" w={75} /><Layer name="" w={0} />
        </div>
        <div className="flex flex-1 flex-col items-center bg-[#4a4a4a] text-[#808080]">
          <Chevron up className="mt-[7px]" /><div className="mt-[112px] h-[72px] w-3 bg-[#696969]" /><Chevron className="mb-[7px] mt-auto" />
        </div>
      </div>
      <div className="flex h-[25px] shrink-0 items-center border-t border-[#3e3e3e] pl-9 text-[#dedede]">
        <S w={14} h={8} className="text-[#888]"><path d="M6 1.500H3.500a2.500 2.500 0 0 0 0 5H6M8 1.500h2.500a2.500 2.500 0 0 1 0 5H8M4.500 4h5" strokeWidth="1.300" /></S>
        <span className="ml-[14px] text-[14px] italic leading-none">fx</span>
        <S w={4} h={3} className="mt-4"><path {...F} d="M0 0h4L2 2.500Z" /></S>
        <S w={13} h={10} className="ml-[11px]"><path {...F} fillRule="evenodd" d="M0 0h13v10H0ZM6.500 2a3 3 0 1 0 0 6 3 3 0 0 0 0-6" /></S>
        <S w={14} h={14} className="ml-4"><circle cx="6" cy="6.500" r="5" strokeWidth="1.200" /><path {...F} d="M9.500 3a5 5 0 1 0-7 7ZM10 11.500h4l-2 2.500Z" /></S>
        <S w={12} h={10} className="ml-3"><path {...F} d="M0 0h5l1 1.500h6V10H0Z" /></S>
        <S w={11} h={11} className="ml-4"><path d="M.8.800h9.400v9.400H5.500L.8 5.500ZM1 5.500h4.500V10" strokeWidth="1.300" /></S>
        <S w={11} h={13} className="ml-[15px]"><path d="M0 2.500h11M3.500 2V.6h4V2M1.500 3v9.300h8V3M4 4.500v6M5.500 4.500v6M7 4.500v6" /></S>
      </div>
    </div>
  );
}

function RightDock() {
  return (
    <div className="flex flex-1 flex-col border-l-[3px] border-r border-[#3c3c3c]">
      <div className="flex h-[12px] shrink-0 items-center justify-between border-b border-[#383838] bg-[#424242] pl-[24px] pr-[6px]"><DoubleArrow /><DoubleArrow right /></div>
      <div className="flex flex-1">
        <div className="flex w-[40px] flex-col border-r-[3px] border-[#3c3c3c]">
          {STRIP.map(([c, icon], i) => (
            <div key={i} className={"shrink-0 overflow-hidden border-b border-[#3c3c3c] pl-[9px] pt-[3px] " + c}>
              <Grip />
              <S w={37} h={60} className="-ml-[9px] -mt-[4px] text-[#dadada]"><g transform={i < 4 ? "translate(2 0)" : "translate(3 0)"}>{icon}</g></S>
            </div>
          ))}
        </div>
        <div className="flex flex-1 flex-col"><ColorPanel /><LayersPanel /></div>
      </div>
    </div>
  );
}

const APPS = [
  { icon: <g stroke="none"><circle cx="5" cy="8" r="3" fill="#1b8ad4" /><circle cx="19" cy="8" r="3" fill="#1257a5" /><rect x="0" y="11" width="11" height="12" rx="4" fill="#1b8ad4" /><rect x="13" y="11" width="11" height="12" rx="4" fill="#1257a5" /><circle cx="12" cy="5" r="3.500" fill="#35b5f1" /><path d="M6 23V14a5 5 0 0 1 12 0v9Z" fill="#2fb0ef" /></g> },
  { icon: <g stroke="none"><path d="M0 8 12 1l12 7v5H0Z" fill="#0f5aa8" /><path d="M2 8h20L12 15Z" fill="#f2f2f2" /><path d="M0 8.500 12 15 24 8v15H0Z" fill="#2bb3f0" /><path d="M24 8 0 23h24Z" fill="#1686d9" /><path d="M24 8 0 23h14L24 17Z" fill="#43c4f5" fillOpacity=".65" /></g> },
  { line: "w-[40px]", icon: <g stroke="none"><rect x="1" y="1" width="22" height="22" rx="1" fill="#29a3ea" /><path d="m14 15 6-6 3 3v11H14Z" fill="#6a86d8" /><path d="M1 15 8 8.500 20 23H1Z" fill="#173c83" /><circle cx="16" cy="6" r="2" fill="#fff" /></g> },
  { icon: <g stroke="none"><rect x="1" y="1" width="22" height="22" rx="1" fill="#209be8" /><path d="M1 1h22v5H1Z" fill="#0f5aa8" /><path d="M5 0h2v5H5zM17 0h2v5h-2z" fill="#58c8f5" /><path d="M9 10h10M5 14h14M5 18h10" stroke="#fff" strokeWidth="2" strokeDasharray="2 2" /></g> },
  { icon: <g stroke="none"><path d="M18 0 24 3v18l-6 3Z" fill="#2c9ff0" /><path d="M18 0v7L3 18.500.5 16Z" fill="#1180cc" /><path d="M18 24v-7L3 5.500.5 8Z" fill="#0b70b7" /></g> },
  { icon: <g stroke="none"><circle cx="8" cy="7" r="7" fill="#30aee5" /><path d="m1 10 0 6 6-3Z" fill="#30aee5" /><circle cx="15" cy="14" r="8.500" fill="#1260b6" /><path d="m16 21 8 3-3-7Z" fill="#1260b6" /><text x="15" y="19" textAnchor="middle" fontSize="12" fontWeight="bold" fill="#fff">?</text></g> },
  { icon: <g stroke="none"><circle cx="12" cy="12" r="12" fill="#168bd8" /><path d="M1 8C4-3 24-2 24 12c0 6-7 6-10 4 3-5-2-10-7-10-3 0-5 1-6 2Z" fill="#3fc6d8" /><path d="M14 .2C20 1 24 6 24 12c0 5-6 6-9 4 3-4 0-12-1-15.800Z" fill="#63d957" fillOpacity=".75" /><path d="M9 9c-4 7 3 13 11 10-5 7-17 6-18-3-1-5 4-9 10-8Z" fill="#1660aa" /><path d="M12 9.500c4 0 3 3.500 2 5.500 2 3 6 2.500 8.500 1.500-1 2.500-3 3.500-5 3.500-4 0-7.500-2-7.500-5.500 0-2.500 0-4.500 2-5Z" fill="#202020" /></g> },
  { line: "w-[40px]", icon: <g stroke="none"><rect x="12" y="2.500" width="11" height="18" fill="#fff" stroke="#d9472b" /><path d="M14 15.500h7M14 18h7" stroke="#d9472b" /><circle cx="17" cy="9" r="4" fill="#d9472b" /><path d="m0 2.500 14-2.500v24L0 21.500Z" fill="#d14524" /><text x="7" y="17" textAnchor="middle" fontSize="13" fontWeight="bold" fill="#fff">P</text></g> },
  { line: "w-[48px]", active: true, icon: <g stroke="none"><rect x="1.750" y="1.750" width="21" height="20.500" fill="#001d26" stroke="#14c5f5" strokeWidth="1.500" /><text x="12" y="16.500" textAnchor="middle" fontSize="12" fontWeight="600" fill="#14c5f5">Ps</text></g> },
  { line: "w-[40px]", icon: <g stroke="none"><path d="M1 3h9l2 2h11v16H1Z" fill="#e6a519" /><path d="M1 6 10 6l2-2h11v17H1Z" fill="#ffd766" /><path d="M5 21v-8h14v8h-4v-4H9v4Z" fill="#3f8fd6" /></g> },
  { line: "w-[40px]", icon: <g stroke="none"><circle cx="12" cy="12" r="11" fill="#134d84" /><path d="M12 2c6 1 9 5 9 9l-3 3-3-5-4-2ZM4 16l5 1 2 5Z" fill="#68a943" /><path d="m14 13 8 8" stroke="#d28c4a" strokeWidth="3" /><circle cx="10" cy="9" r="5.500" fill="#a8d7e7" stroke="#e7eaec" strokeWidth="1.500" /></g> },
];

function Taskbar() {
  return (
    <footer className="flex h-10 shrink-0 bg-[#202020] text-white">
      <div className="flex w-[48px] items-center justify-center"><S w={16} h={16}><path {...F} d="M0 2.300 6.500 1.400V7.600H0ZM7.300 1.300 16 0V7.600H7.300ZM0 8.400H6.500v6.200L0 13.700ZM7.300 8.400H16V16L7.300 14.700Z" /></S></div>
      <div className="flex w-[344px] items-center border border-[#bdbdbd] bg-[#f2f2f2] text-[14px] text-[#333]">
        <S w={17} h={18} className="ml-[11px] text-[#111]"><circle cx="10.500" cy="6.500" r="5.300" strokeWidth="1.400" /><path d="M6.800 10.500.8 16.500" strokeWidth="1.500" /></S>
        <Fit w={128} className="ml-[11px]">Type here to search</Fit>
      </div>
      <div className="flex w-[48px] items-center justify-center"><div className="h-4 w-4 rounded-full border-2 border-white" /></div>
      <div className="flex w-[50px] items-center justify-center pr-[3px]"><S w={18} h={16}><path d="M1.500 0v2.500h10V0M1.500 16v-2.500h10V16M1.500 5.500h10v5h-10zM15.500 0v3M15.500 9v7" strokeWidth="1.200" /><path {...F} d="M14 4h3v3.500h-3z" /></S></div>
      {APPS.map((a, i) => (
        <div key={i} className={"flex h-10 flex-col items-center " + (a.active ? "mr-px w-[48px] bg-[#4d4d4d]" : i === 7 ? "w-[50px]" : "w-[49px]")}>
          <S w={24} h={24} className="mt-2">{a.icon}</S>
          {a.line && <div className={"mt-auto h-[2px] bg-[#76b9ed] " + a.line} />}
        </div>
      ))}
      <div className="ml-auto flex items-center">
        <S w={12} h={7}><path d="m1 6 5-5 5 5" strokeWidth="1.400" /></S>
        <S w={17} h={13} className="ml-[9px]"><path d="M7 4.500h8.500v7H5.500V9M1.500 0v3M4 0v3" strokeWidth="1.200" /><path {...F} d="M.5 2.500h5V5L4 6.500v3H2.500v-3L.5 5ZM7 6h7v4H7zM16 6.500h1v3h-1z" /></S>
        <S w={13} h={13} className="ml-[10px] text-[#aaa]"><path d="M1 12.500C1 6 6 1 12.500 1M4 12.500c0-5 3.500-8.500 8.500-8.500M7 12.500c0-3 2.500-5.500 5.500-5.500" strokeWidth="1.100" /><circle cx="11" cy="11.500" r="1.500" fill="#fff" stroke="none" /></S>
        <S w={17} h={14} className="ml-2"><path d="M.6 4.500h2.500L6.500 1v12L3.100 9.500H.6ZM9 4.500c1 1.500 1 3.500 0 5" strokeWidth="1.200" /><path d="M11.500 3c2 2.500 2 5.500 0 8M14 1c3 3.500 3 8.500 0 12" stroke="#777" /></S>
        <div className="ml-[14px] flex w-[16px] flex-col items-center text-[11px] leading-[18px]"><span className="font-['DejaVu_Sans',sans-serif]">فا</span><Fit w={13}>FA</Fit></div>
        <div className="ml-[13px] flex w-[60px] flex-col items-center text-[12px] leading-[18px]"><Fit w={44}>9:18 AM</Fit><Fit w={53}>9/21/2020</Fit></div>
        <S w={25} h={25} className="ml-[12px] mt-[2px]"><path {...F} d="M0 0h17v13H8l-4 4v-4H0Z" /><path d="M3 4h11M3 7h11M3 10h8" stroke="#202020" /><circle cx="16" cy="16" r="8" fill="#303030" stroke="#888" /><text x="16" y="20" textAnchor="middle" fontSize="11" fontWeight="bold" fill="#fff" stroke="none">6</text></S>
        <div className="ml-[12px] mr-1 h-10 w-px bg-[#777]" />
      </div>
    </footer>
  );
}

export default function App() {
  return (
    <div className="flex h-[768px] w-[1366px] flex-col overflow-hidden bg-[#535353] font-['Open_Sans','Noto_Sans',sans-serif] leading-normal">
      <MenuBar />
      <OptionsBar />
      <div className="flex h-[665px] shrink-0 border-b border-[#383838]">
        <Toolbar />
        <Document />
        <RightDock />
      </div>
      <Taskbar />
    </div>
  );
}
